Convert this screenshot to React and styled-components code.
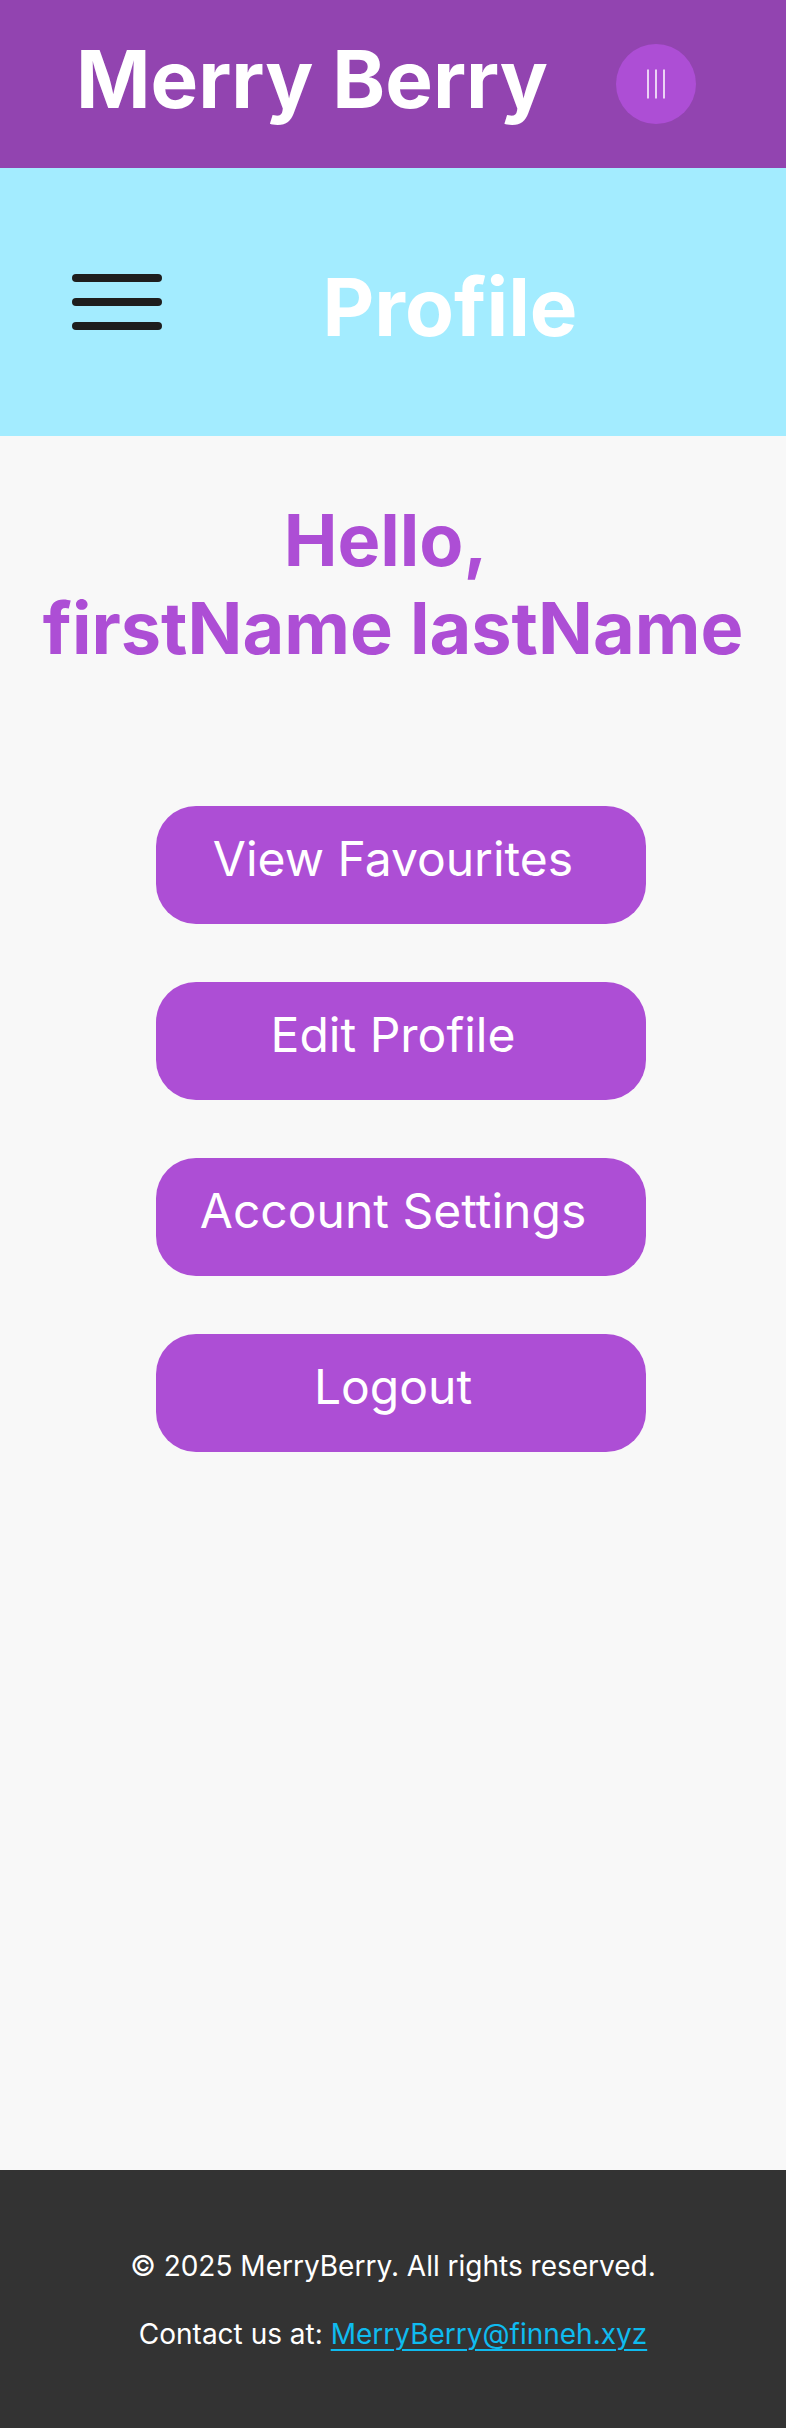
import React from 'react';
import styled, { createGlobalStyle } from 'styled-components';

const GlobalStyle = createGlobalStyle`
  * { box-sizing: border-box; }
  body { margin: 0; background: #f8f8f8; font-family: Inter, "Liberation Sans", sans-serif; }
`;

const Page = styled.div`
  display: flex;
  flex-direction: column;
  min-height: 100vh;
`;

const Header = styled.header`
  display: flex;
  align-items: center;
  justify-content: space-between;
  padding: 30px 90px 41px 76px;
  background: #9244b0;
`;

const Brand = styled.div`
  font-size: 80px;
  font-weight: 700;
  line-height: 97px;
  color: #fff;
`;

const RoundButton = styled.button`
  display: flex;
  align-items: center;
  justify-content: center;
  width: 80px;
  height: 80px;
  margin-top: 11px;
  padding: 0;
  border: 0;
  border-radius: 50%;
  background: #ad4ed5;
`;

const TitleBar = styled.div`
  display: grid;
  grid-template-columns: 90px 1fr 90px;
  align-items: center;
  padding: 90px 72px 81px;
  background: #a3ecff;
`;

const MenuButton = styled.button`
  display: flex;
  flex-direction: column;
  gap: 16px;
  margin-bottom: 10px;
  padding: 0;
  border: 0;
  background: none;
`;

const MenuBar = styled.span`
  width: 100%;
  height: 8px;
  border-radius: 4px;
  background: #1e1e1e;
`;

const Title = styled.h1`
  margin: 0;
  padding-left: 114px;
  text-align: center;
  font-size: 80px;
  font-weight: 700;
  line-height: 97px;
  color: #fff;
`;

const Main = styled.main`
  flex: 1;
  padding-top: 60px;
`;

const Greeting = styled.h2`
  margin: 0;
  text-align: center;
  white-space: break-spaces;
  font-size: 72px;
  font-weight: 700;
  line-height: 88px;
  color: #ad4ed5;
`;

const Actions = styled.nav`
  display: flex;
  flex-direction: column;
  align-items: center;
  gap: 58px;
  padding: 134px 0 58px 16px;
`;

const Action = styled.button`
  width: 490px;
  max-width: 100%;
  padding: 24px 16px 36px 0;
  border: 0;
  border-radius: 40px;
  background: #ad4ed5;
  font-family: inherit;
  font-size: 48px;
  font-weight: 400;
  line-height: 58px;
  color: #fff;
`;

const Footer = styled.footer`
  display: flex;
  flex-direction: column;
  gap: 34px;
  padding: 79px 24px 77px;
  background: #333;
  text-align: center;
  font-size: 28px;
  line-height: 34px;
  color: #fff;
`;

const Line = styled.p`
  margin: 0;
`;

const MailLink = styled.a`
  color: #0fbbef;
  text-decoration-thickness: 2px;
  text-underline-offset: 5px;
`;

const actions = ['View Favourites', 'Edit Profile', 'Account Settings', 'Logout'];

export default function App() {
  return (
    <Page>
      <GlobalStyle />
      <Header>
        <Brand>Merry Berry</Brand>
        <RoundButton type="button" aria-label="Options">
          <svg width="20" height="30" viewBox="0 0 20 30" stroke="#fff" strokeWidth="1.5" aria-hidden="true">
            <path d="M2 0.5v29M10 0.5v29M18 0.5v29" />
          </svg>
        </RoundButton>
      </Header>
      <TitleBar>
        <MenuButton type="button" aria-label="Menu">
          <MenuBar />
          <MenuBar />
          <MenuBar />
        </MenuButton>
        <Title>Profile</Title>
      </TitleBar>
      <Main>
        <Greeting>{'Hello, \nfirstName lastName'}</Greeting>
        <Actions aria-label="Profile actions">
          {actions.map((label) => (
            <Action key={label} type="button">{label}</Action>
          ))}
        </Actions>
      </Main>
      <Footer>
        <Line>© 2025 MerryBerry. All rights reserved.</Line>
        <Line>
          Contact us at: <MailLink href="mailto:MerryBerry@finneh.xyz">MerryBerry@finneh.xyz</MailLink>
        </Line>
      </Footer>
    </Page>
  );
}
